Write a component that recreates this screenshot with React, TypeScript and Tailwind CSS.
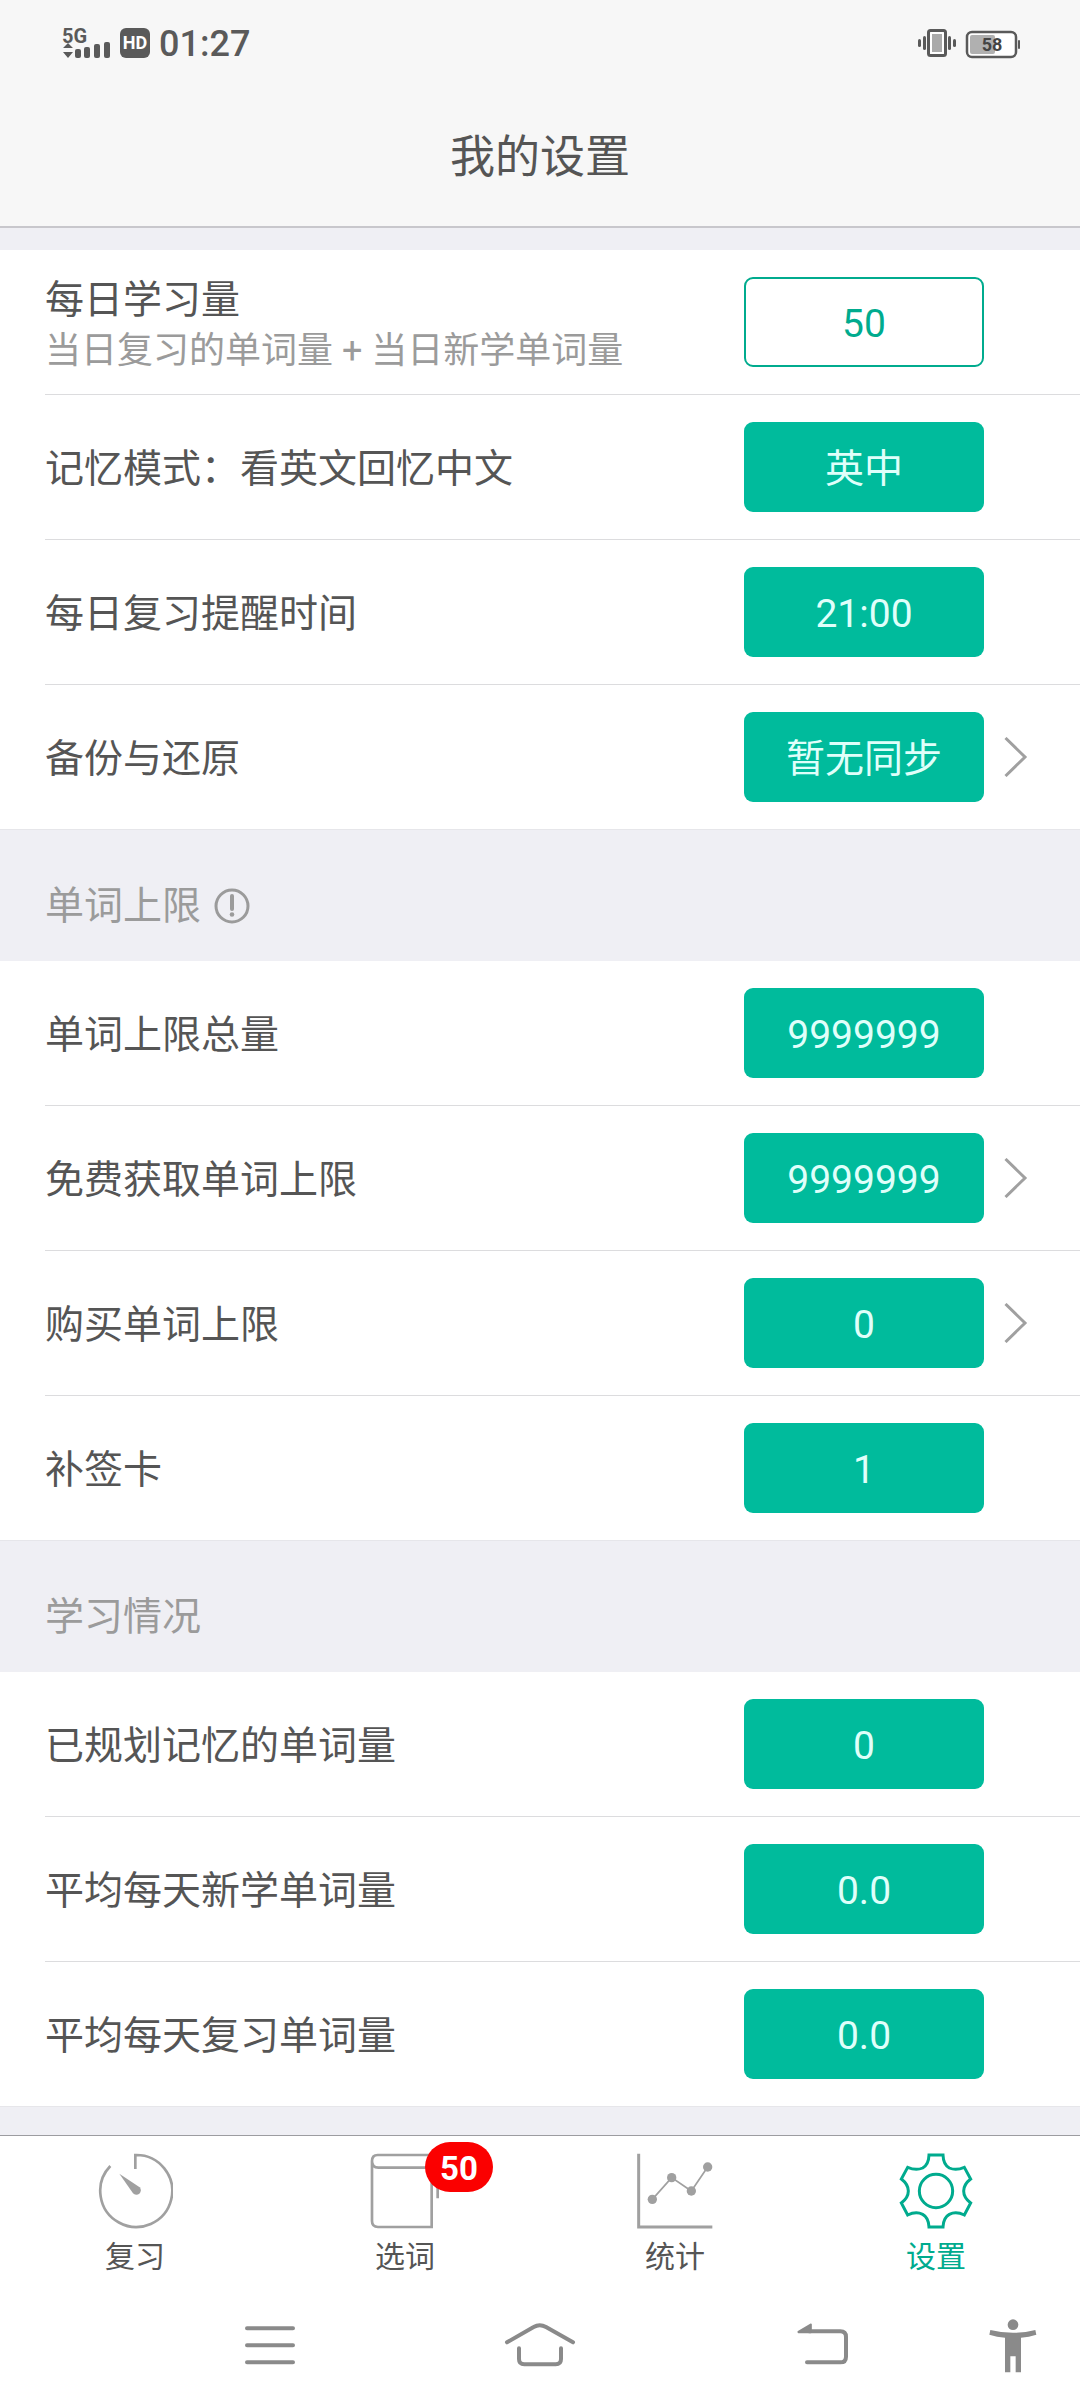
import React from "react";

type Row = {
  id: string;
  label: string;
  hint?: string;
  value: string;
  outlined?: boolean;
  arrow?: boolean;
};

const basicRows: Row[] = [
  { id: "daily", label: "每日学习量", hint: "当日复习的单词量 + 当日新学单词量", value: "50", outlined: true },
  { id: "mode", label: "记忆模式：看英文回忆中文", value: "英中" },
  { id: "remind", label: "每日复习提醒时间", value: "21:00" },
  { id: "backup", label: "备份与还原", value: "暂无同步", arrow: true },
];

const limitRows: Row[] = [
  { id: "total", label: "单词上限总量", value: "9999999" },
  { id: "free", label: "免费获取单词上限", value: "9999999", arrow: true },
  { id: "buy", label: "购买单词上限", value: "0", arrow: true },
  { id: "card", label: "补签卡", value: "1" },
];

const studyRows: Row[] = [
  { id: "planned", label: "已规划记忆的单词量", value: "0" },
  { id: "avg-new", label: "平均每天新学单词量", value: "0.0" },
  { id: "avg-review", label: "平均每天复习单词量", value: "0.0" },
];

function StatusBar() {
  return (
    <div className="flex items-center justify-between px-[60px] pt-5 text-[#5a5a5a]">
      <div className="flex items-center">
        <svg width="50" height="44" viewBox="60 20 50 44" fill="currentColor" aria-hidden="true">
          <text x="62" y="42" fontSize="20" fontWeight="700">5G</text>
          <path d="M68 42l5 5H63zM68 57l5-6H63z" />
          <rect x="75" y="48" width="6" height="9" rx="2" />
          <rect x="84" y="46" width="6" height="11" rx="2" />
          <rect x="94" y="43" width="6" height="14" rx="2" />
          <rect x="104" y="41" width="6" height="16" rx="2" />
        </svg>
        <span className="ml-[10px] flex h-[30px] w-[30px] items-center justify-center rounded-md bg-[#5a5a5a] text-[18px] font-bold leading-none text-white">
          HD
        </span>
        <span className="ml-[9px] pt-[2px] text-[36px] font-medium leading-[44px]">01:27</span>
      </div>
      <svg width="104" height="44" viewBox="916 20 104 44" aria-hidden="true">
        <g fill="#5a5a5a">
          <rect x="918" y="38" width="3" height="8" rx="1.5" />
          <rect x="923" y="35" width="3" height="14" rx="1.5" />
          <rect x="948" y="35" width="3" height="14" rx="1.5" />
          <rect x="953" y="38" width="3" height="8" rx="1.5" />
          <rect x="1018" y="39" width="2" height="9" rx="1" />
        </g>
        <rect x="928.5" y="29.5" width="17" height="25" rx="2" fill="#fff" stroke="#5a5a5a" strokeWidth="3" />
        <rect x="932" y="33" width="10" height="18" fill="#aaa" />
        <rect x="967" y="31" width="49" height="25" rx="5" fill="#fff" stroke="#5a5a5a" strokeWidth="2.5" />
        <rect x="970" y="34" width="25" height="19" rx="2" fill="#b0b0b0" />
        <text x="992" y="50" fontSize="18" fontWeight="700" textAnchor="middle" fill="#444">58</text>
      </svg>
    </div>
  );
}

function SettingRow({ row, last }: { row: Row; last: boolean }) {
  return (
    <li className="pl-[45px]">
      <div className={`flex items-center py-[27px] pr-[52px] ${last ? "" : "border-b border-[#dcdcde]"}`}>
        <div className="-my-2 flex-1 pt-1">
          <div id={row.id} className="text-[39px] leading-[54px] text-[#555]">{row.label}</div>
          {row.hint && <div className="text-[36px] leading-[48px] text-[#9b9b9b]">{row.hint}</div>}
        </div>
        <button
          type="button"
          aria-describedby={row.id}
          className={
            row.outlined
              ? "w-60 rounded-[9px] border-2 border-[#00ab8e] bg-white pb-[14px] pt-[18px] text-[39px] leading-[54px] text-[#00ab8e]"
              : "w-60 rounded-[9px] bg-[#00bb9c] pb-4 pt-5 text-[39px] leading-[54px] text-[#dffffa]"
          }
        >
          {row.value}
        </button>
        <div className="flex w-11 justify-end">
          {row.arrow && (
            <svg width="24" height="40" viewBox="0 0 24 40" fill="none" stroke="#a0a0a0" strokeWidth="3" aria-hidden="true">
              <path d="M1.500 1l19.500 19L1.500 39" />
            </svg>
          )}
        </div>
      </div>
    </li>
  );
}

function RowList({ rows }: { rows: Row[] }) {
  return (
    <ul className="border-b border-[#e6e6ea] bg-white">
      {rows.map((row, i) => (
        <SettingRow key={row.id} row={row} last={i === rows.length - 1} />
      ))}
    </ul>
  );
}

function SectionTitle({ children }: { children: React.ReactNode }) {
  return (
    <h2 className="flex items-center gap-[13px] px-[45px] pb-[29px] pt-[50px] text-[39px] leading-[52px] text-[#9b9b9b]">
      {children}
    </h2>
  );
}

function TabBar() {
  const tab = "relative flex flex-col items-center pt-[17px] text-[30px] leading-9 text-[#555]";
  return (
    <nav className="grid grid-cols-4 border-t border-[#9c9ca0] bg-white">
      <a href="#review" className={tab}>
        <svg width="76" height="76" viewBox="108 190 228 228" fill="none" stroke="#a0a0a0" strokeWidth="8" aria-hidden="true">
          <path d="M223 238V196A108 108 0 1 1 148 229" />
          <path d="M175 252L236 293A13 13 0 1 1 216 311Z" fill="#a0a0a0" stroke="none" />
        </svg>
        <span className="mt-[10px]">复习</span>
      </a>
      <a href="#words" className={tab}>
        <svg width="76" height="76" viewBox="920 190 228 228" fill="none" stroke="#a0a0a0" strokeWidth="8" aria-hidden="true">
          <path d="M1132 326V196H952Q935 196 935 214V394Q935 412 953 412H1114V234H954Q935 234 935 214" />
        </svg>
        <span className="absolute left-1/2 top-[6px] ml-5 flex h-[50px] w-[68px] items-center justify-center rounded-full bg-[#fb0000] pt-[2px] text-[33px] font-bold leading-none text-white">
          50
        </span>
        <span className="mt-[10px]">选词</span>
      </a>
      <a href="#stats" className={tab}>
        <svg width="76" height="76" viewBox="170 190 228 228" fill="none" stroke="#a0a0a0" aria-hidden="true">
          <path d="M175 192V412H396" strokeWidth="9" />
          <path d="M216 329L274 264L333 304L382 232" strokeWidth="5" />
          <g fill="#a0a0a0" stroke="none">
            <circle cx="216" cy="329" r="14" />
            <circle cx="274" cy="264" r="14" />
            <circle cx="333" cy="304" r="14" />
            <circle cx="382" cy="232" r="14" />
          </g>
        </svg>
        <span className="mt-[10px]">统计</span>
      </a>
      <a href="#settings" aria-current="page" className={`${tab} pr-[18px]`}>
        <svg width="76" height="76" viewBox="954 190 228 228" fill="none" stroke="#00ab8e" strokeWidth="9" aria-hidden="true">
          <path d="M1047 196H1089Q1090 225 1108 235Q1128 244 1153 233L1172 268Q1151 284 1151 304Q1151 324 1172 340L1153 376Q1128 364 1108 374Q1090 384 1089 412H1047Q1046 384 1028 374Q1008 364 983 376L964 340Q985 324 985 304Q985 284 964 268L983 233Q1008 244 1028 235Q1046 225 1047 196Z" />
          <circle cx="1068" cy="304" r="50" />
        </svg>
        <span className="mt-[10px] text-[#00ab8e]">设置</span>
      </a>
    </nav>
  );
}

function SystemNav() {
  const btn = "col-span-2 flex justify-center";
  return (
    <div className="grid grid-cols-8 bg-white pb-[35px] pt-[42px]">
      <button type="button" aria-label="菜单" className={`${btn} col-start-2`}>
        <svg width="50" height="56" viewBox="138 50 150 168" fill="none" stroke="#8a8a8a" strokeWidth="12" strokeLinecap="round">
          <path d="M144 84H282M144 135H282M144 186H282" />
        </svg>
      </button>
      <button type="button" aria-label="主页" className={btn}>
        <svg width="72" height="56" viewBox="915 50 216 168" fill="none" stroke="#8a8a8a" strokeWidth="12" strokeLinecap="round">
          <path d="M924 126L1004 80Q1022 69 1041 80L1122 126" />
          <path d="M960 144V176Q960 192 976 192H1070Q1086 192 1086 176V144" />
        </svg>
      </button>
      <button type="button" aria-label="返回" className={btn}>
        <svg width="78" height="56" viewBox="36 50 234 168" fill="none" stroke="#8a8a8a" strokeWidth="12" strokeLinecap="round">
          <path d="M144 186H244Q261 186 261 169V110Q261 93 244 93H150" />
          <path d="M118 94L156 72V96H118Z" fill="#8a8a8a" strokeWidth="5" strokeLinejoin="round" />
        </svg>
      </button>
      <button type="button" aria-label="无障碍" className="flex justify-center">
        <svg width="48" height="56" viewBox="686 50 144 168" fill="#8a8a8a">
          <circle cx="758" cy="73" r="16" />
          <path d="M690 89Q758 106 825 89L828 103Q806 110 782 112V216H766V168H750V216H734V112Q710 110 687 103Z" />
        </svg>
      </button>
    </div>
  );
}

export default function App() {
  return (
    <div className="min-h-screen bg-[#efeff4] font-[Roboto,'Noto_Sans_CJK_SC',sans-serif]">
      <header className="border-b-2 border-[#c8c7cc] bg-[#f7f7f7]">
        <StatusBar />
        <h1 className="pb-[38px] pt-[62px] text-center text-[45px] leading-[60px] text-[#555]">我的设置</h1>
      </header>
      <main className="pb-7 pt-[22px]">
        <RowList rows={basicRows} />
        <SectionTitle>
          单词上限
          <svg width="36" height="36" viewBox="0 0 36 36" fill="none" stroke="#9b9b9b" strokeWidth="3" aria-hidden="true">
            <circle cx="18" cy="18" r="16" />
            <path d="M18 8v13" strokeWidth="4" strokeLinecap="round" />
            <circle cx="18" cy="26.500" r="2.300" fill="#9b9b9b" stroke="none" />
          </svg>
        </SectionTitle>
        <RowList rows={limitRows} />
        <SectionTitle>学习情况</SectionTitle>
        <RowList rows={studyRows} />
      </main>
      <TabBar />
      <SystemNav />
    </div>
  );
}
